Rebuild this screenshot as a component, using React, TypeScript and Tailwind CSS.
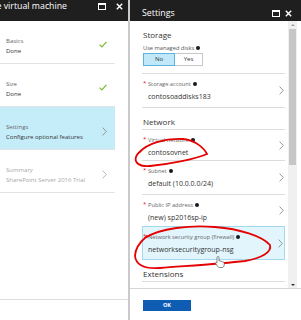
import React from "react";

const Info = () => (
  <span className="inline-block w-[4px] h-[4px] rounded-full bg-[#1a1a1a] ml-[2px] align-middle relative top-[-0.5px]" />
);

const Chevron = ({ color = "#8c8c8c" }: { color?: string }) => (
  <svg width="5" height="9" viewBox="0 0 5 9" className="shrink-0">
    <path d="M0.6 0.6 L4.3 4.5 L0.6 8.4" fill="none" stroke={color} strokeWidth="0.9" />
  </svg>
);

const Check = () => (
  <svg width="8" height="7" viewBox="0 0 8 7">
    <path d="M0.6 3.6 L2.9 5.9 L7.4 0.8" fill="none" stroke="#7cb82f" strokeWidth="1.2" />
  </svg>
);

const MaxIcon = () => (
  <div className="w-[8px] h-[7px] border border-white border-t-[2px]" />
);

const CloseIcon = () => (
  <svg width="7" height="7" viewBox="0 0 7 7">
    <path d="M0.8 0.8 L6.2 6.2 M6.2 0.8 L0.8 6.2" stroke="white" strokeWidth="1.4" />
  </svg>
);

function LeftItem({
  label,
  value,
  icon,
  active,
  disabled,
}: {
  label: string;
  value: string;
  icon?: React.ReactNode;
  active?: boolean;
  disabled?: boolean;
}) {
  return (
    <div
      className={
        "h-[43px] w-[115px] border-b border-[#e2e2e2] pl-[6px] pr-[8px] flex items-start " +
        (active ? "bg-[#c5ecf9]" : "")
      }
    >
      <div className="flex-1 pt-[15px]">
        <div className={"text-[6px] leading-[10px] " + (disabled ? "text-[#a8a8a8]" : "text-[#666]")}>{label}</div>
        <div className={"text-[6px] leading-[10px] " + (disabled ? "text-[#a8a8a8]" : "text-[#333]")}>{value}</div>
      </div>
      <div className="pt-[20px]">{icon}</div>
    </div>
  );
}

function RowContent({ label, value }: { label: string; value: string }) {
  return (
    <>
      <div className="flex-1 self-start pt-[5px]">
        <div className="relative text-[5.7px] leading-[10px] text-[#666] whitespace-nowrap">
          <span className="absolute left-[-5px] top-[-1px] text-[#e81123] text-[6px]">*</span>
          {label}
          <Info />
        </div>
        <div className="mt-[2px] text-[7px] leading-[12px] text-[#333] whitespace-nowrap">{value}</div>
      </div>
      <Chevron />
    </>
  );
}

export default function App() {
  return (
    <div className="relative w-[301px] h-[320px] overflow-hidden bg-white flex font-['Open_Sans','Noto_Sans',sans-serif]">
      {/* Left blade */}
      <div className="w-[128px] h-[320px] flex flex-col">
        <div className="h-[21px] bg-[#1f1f1f] flex items-start overflow-hidden">
          <div className="flex-1 text-white text-[8.8px] leading-[12px] ml-[-3.5px] whitespace-nowrap">e virtual machine</div>
          <div className="flex items-center gap-[10px] pt-[2.5px] pr-[5px]">
            <MaxIcon />
            <CloseIcon />
          </div>
        </div>
        <div className="h-[278px]">
          <LeftItem label="Basics" value="Done" icon={<Check />} />
          <LeftItem label="Size" value="Done" icon={<Check />} />
          <LeftItem label="Settings" value="Configure optional features" icon={<Chevron />} active />
          <LeftItem label="Summary" value="SharePoint Server 2016 Trial" icon={<Chevron color="#b0b0b0" />} disabled />
        </div>
        <div className="border-t border-[#dedede] flex-1" />
      </div>

      {/* Divider */}
      <div className="w-[2px] h-[320px] bg-[#cacaca]" />

      {/* Right blade */}
      <div className="flex-1 h-[320px] flex flex-col">
        <div className="h-[21px] bg-[#1f1f1f] flex items-start">
          <div className="flex-1 text-white text-[8.8px] leading-[12px] pl-[12px] pt-[7px]">Settings</div>
          <div className="flex items-center gap-[5px] pt-[10px] pr-[9px]">
            <MaxIcon />
            <CloseIcon />
          </div>
        </div>
        <div className="h-[267px] flex">
          <div className="w-[158px] pl-[12px] pr-[3px] overflow-hidden">
            {/* Storage */}
            <div className="h-[53px] border-b border-[#dcdcdc]">
              <div className="pt-[9px] pl-[1px] text-[8px] leading-[10px] text-[#333]">Storage</div>
              <div className="mt-[4px] pl-[1px] text-[5.7px] leading-[8px] text-[#555]">
                Use managed disks
                <Info />
              </div>
              <div className="mt-[1px] pl-[1px] flex">
                <div className="w-[32px] h-[13px] border border-[#5ab4de] bg-[#c0e8f8] text-[6px] text-[#333] flex items-center justify-center">
                  No
                </div>
                <div className="w-[28px] h-[13px] border border-l-0 border-[#c8c8c8] bg-white text-[6px] text-[#333] flex items-center justify-center">
                  Yes
                </div>
              </div>
            </div>
            <div className="h-[34px] border-b border-[#dcdcdc] flex items-center pl-[6px] pr-[1px]">
              <RowContent label="Storage account" value="contosoaddisks183" />
            </div>
            <div className="h-[22px] border-b border-[#dcdcdc] pt-[9px] pl-[1px] text-[8px] leading-[10px] text-[#333]">
              Network
            </div>
            <div className="h-[31px] border-b border-[#dcdcdc] flex items-center pl-[6px] pr-[1px]">
              <RowContent label="Virtual network" value="contosovnet" />
            </div>
            <div className="h-[34px] border-b border-[#dcdcdc] flex items-center pl-[6px] pr-[1px]">
              <RowContent label="Subnet" value="default (10.0.0.0/24)" />
            </div>
            <div className="h-[31px] flex items-center pl-[6px] pr-[1px]">
              <RowContent label="Public IP address" value="(new) sp2016sp-ip" />
            </div>
            <div className="h-[34px] border border-[#a3daf0] bg-[#e2f5fc] flex items-center pl-[5px] pr-[1px]">
              <RowContent label="Network security group (firewall)" value="networksecuritygroup-nsg" />
            </div>
            <div className="h-[22px] border-b border-[#dcdcdc] pt-[9px] pl-[1px] text-[8px] leading-[10px] text-[#333]">
              Extensions
            </div>
          </div>
          {/* Scrollbar */}
          <div className="w-[9px] bg-[#f0f0f0] flex flex-col items-center">
            <div className="h-[8px] flex items-center justify-center">
              <div className="w-0 h-0 border-l-[2px] border-r-[2px] border-b-[2px] border-l-transparent border-r-transparent border-b-[#a0a0a0]" />
            </div>
            <div className="w-[7px] h-[136px] bg-[#c6c6c6]" />
            <div className="flex-1" />
            <div className="h-[7px] flex items-center justify-center">
              <div className="w-0 h-0 border-l-[2px] border-r-[2px] border-t-[2px] border-l-transparent border-r-transparent border-t-[#333]" />
            </div>
          </div>
          <div className="flex-1" />
        </div>
        <div className="flex-1 border-t border-[#d6d6d6] pt-[11px] pl-[13px]">
          <div className="w-[48px] h-[11px] bg-[#0f5cb3] flex items-center justify-center text-white text-[5.5px] font-bold">
            OK
          </div>
        </div>
      </div>

      {/* Annotation overlay */}
      <svg className="absolute left-0 top-0 pointer-events-none" width="301" height="320" viewBox="0 0 301 320">
        <path
          d="M140,152 C146,144 165,138 183,139 C195,140 204,148 207,154 C196,159 170,164 150,166 C140,167 134,163 136,157 C137,154 139,152 143,149"
          fill="none"
          stroke="#e50000"
          strokeWidth="1.8"
          strokeLinecap="round"
        />
        <path
          d="M145,238 C160,228 190,225 215,227 C240,229 262,236 270,245 C272,252 262,258 245,261 C220,264 185,266 160,268 C145,269 136,265 135,256 C135,248 140,242 147,236"
          fill="none"
          stroke="#e50000"
          strokeWidth="1.8"
          strokeLinecap="round"
        />
        <g transform="translate(215,256)">
          <path
            d="M3,0.5 C3.8,0.5 4,1 4,1.5 V5 L5,4.8 C5.6,4.8 5.8,5.2 5.8,5.5 L6.8,5.4 C7.3,5.4 7.5,5.8 7.5,6 L8.3,6 C8.8,6 9.2,6.4 9.2,7 V9 C9.2,10.5 8.2,11.5 7,11.5 H4.5 C3.5,11.5 3,11 2.5,10.3 L0.7,7.6 C0.4,7.1 0.6,6.6 1,6.5 C1.4,6.4 1.8,6.6 2,6.9 V1.5 C2,1 2.3,0.5 3,0.5 Z"
            fill="white"
            stroke="#555"
            strokeWidth="0.7"
          />
        </g>
      </svg>
    </div>
  );
}
